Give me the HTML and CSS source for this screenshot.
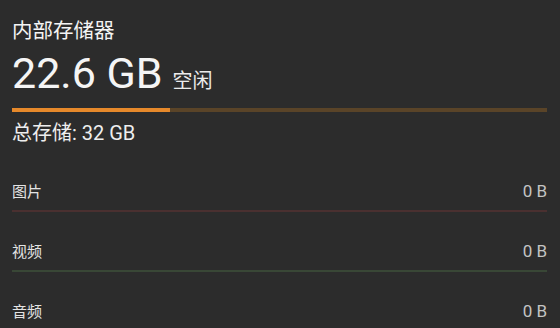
FILE: index.html
```html
<!DOCTYPE html>
<html lang="zh-CN">
<head>
  <meta charset="UTF-8" />
  <meta name="viewport" content="width=device-width, initial-scale=1.0"/>
  <title>内部存储器</title>
  <link rel="stylesheet" href="styles.css">
</head>
<body>

  <!-- SUMMARY -->
  <div class="summary">
    <h1>内部存储器</h1>
    <div class="free">
      <span class="amount">22.6 GB</span>
      <span class="unit">空闲</span>
    </div>
    <div class="bar">
      <div class="bar-fill" style="width: 29.5%"></div>
    </div>
    <div class="total">总存储: 32 GB</div>
  </div>

  <!-- CATEGORIES -->
  <div class="categories">
    <div class="cat-row cat-images">
      <span class="cat-name">图片</span>
      <span class="cat-size">0 B</span>
    </div>
    <div class="cat-row cat-video">
      <span class="cat-name">视频</span>
      <span class="cat-size">0 B</span>
    </div>
    <div class="cat-row cat-audio">
      <span class="cat-name">音频</span>
      <span class="cat-size">0 B</span>
    </div>
  </div>

</body>
</html>
```

FILE: styles.css
```css
/* Reset & Base */
* { box-sizing: border-box; margin: 0; padding: 0; }
body {
  font-family: Roboto, "Noto Sans CJK SC", sans-serif;
  background: #2c2c2c;
  color: #f0f0f0;
  padding: 0 13px 0 12px;
  overflow: hidden;
}

/* Summary */
.summary {
  padding-top: 17px;
}
.summary h1 {
  font-size: 20.5px;
  font-weight: 400;
  line-height: 28px;
  color: #f4f4f4;
}
.free {
  display: flex;
  align-items: baseline;
  margin-top: 6px;
}
.amount {
  font-size: 43px;
  line-height: 44px;
  color: #f5f5f5;
}
.unit {
  font-size: 20px;
  margin-left: 10px;
  color: #ebebeb;
}
.bar {
  height: 4px;
  margin-top: 13px;
  background: #5a4428;
}
.bar-fill {
  height: 100%;
  background: #e6892b;
}
.total {
  font-size: 20px;
  line-height: 26px;
  margin-top: 8px;
  color: #eeeeee;
}

/* Categories */
.categories {
  margin-top: 6px;
}
.cat-row {
  display: flex;
  justify-content: space-between;
  align-items: baseline;
  height: 60px;
  padding-top: 29px;
  padding-bottom: 9px;
  border-bottom: 2px solid #3d3d3d;
  line-height: 20px;
}
.cat-name {
  font-size: 15px;
  color: #e4e4e4;
}
.cat-size {
  font-size: 17px;
  color: #c4c4c4;
}
.cat-images { border-bottom-color: #4a3030; }
.cat-video { border-bottom-color: #394736; }
.cat-audio { border-bottom-color: #30394a; }
```
